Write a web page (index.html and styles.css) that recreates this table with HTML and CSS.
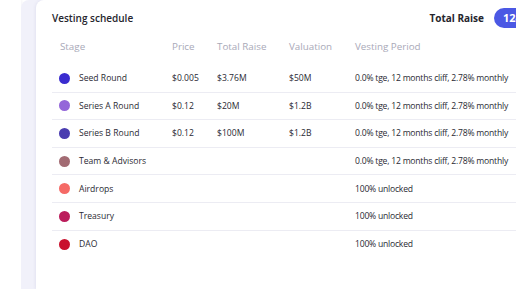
FILE: index.html
```html
<!DOCTYPE html>
<html>
<head>
    <title>Vesting schedule</title>
    <link rel="stylesheet" href="styles.css">
</head>
<body>
    <div class="page">
        <div class="side-panel"></div>
        <div class="content">
            <div class="card">
                <div class="card-header">
                    <h2>Vesting schedule</h2>
                    <div class="raise">
                        <span class="raise-label">Total Raise</span>
                        <span class="raise-badge">124</span>
                    </div>
                </div>

                <div class="table">
                    <div class="row head">
                        <div class="stage-head">Stage</div>
                        <div>Price</div>
                        <div>Total Raise</div>
                        <div>Valuation</div>
                        <div>Vesting Period</div>
                    </div>

                    <div class="row">
                        <span class="dot dot-seed"></span>
                        <div>Seed Round</div>
                        <div>$0.005</div>
                        <div>$3.76M</div>
                        <div>$50M</div>
                        <div class="period">0.0% tge, 12 months cliff, 2.78% monthly</div>
                    </div>
                    <div class="row">
                        <span class="dot dot-series-a"></span>
                        <div>Series A Round</div>
                        <div>$0.12</div>
                        <div>$20M</div>
                        <div>$1.2B</div>
                        <div class="period">0.0% tge, 12 months cliff, 2.78% monthly</div>
                    </div>
                    <div class="row">
                        <span class="dot dot-series-b"></span>
                        <div>Series B Round</div>
                        <div>$0.12</div>
                        <div>$100M</div>
                        <div>$1.2B</div>
                        <div class="period">0.0% tge, 12 months cliff, 2.78% monthly</div>
                    </div>
                    <div class="row">
                        <span class="dot dot-team"></span>
                        <div>Team &amp; Advisors</div>
                        <div></div>
                        <div></div>
                        <div></div>
                        <div class="period">0.0% tge, 12 months cliff, 2.78% monthly</div>
                    </div>
                    <div class="row">
                        <span class="dot dot-airdrops"></span>
                        <div>Airdrops</div>
                        <div></div>
                        <div></div>
                        <div></div>
                        <div class="period">100% unlocked</div>
                    </div>
                    <div class="row">
                        <span class="dot dot-treasury"></span>
                        <div>Treasury</div>
                        <div></div>
                        <div></div>
                        <div></div>
                        <div class="period">100% unlocked</div>
                    </div>
                    <div class="row last">
                        <span class="dot dot-dao"></span>
                        <div>DAO</div>
                        <div></div>
                        <div></div>
                        <div></div>
                        <div class="period">100% unlocked</div>
                    </div>
                </div>
            </div>
        </div>
    </div>
</body>
</html>
```

FILE: styles.css
```css
body {
    font-family: 'Open Sans', 'Noto Sans', sans-serif;
    margin: 0;
    padding: 0;
    background-color: #ffffff;
    color: #2a2a33;
    overflow: hidden;
}
.page {
    display: flex;
    height: 289px;
    width: 600px;
}
.side-panel {
    width: 21px;
    background-color: #ffffff;
    box-shadow: 1px 0 2px rgba(80, 80, 140, 0.06);
}
.content {
    flex: 1;
    background-color: #f1f1fa;
    border-top-left-radius: 8px;
    padding-left: 15px;
}
.card {
    width: 527px;
    height: 100%;
    background-color: #ffffff;
    border-top-left-radius: 8px;
    box-shadow: -1px 0 3px rgba(80, 80, 140, 0.08);
    padding: 0 0 0 16px;
    box-sizing: border-box;
}
.card-header {
    display: flex;
    justify-content: space-between;
    align-items: center;
    height: 36px;
    padding-right: 16px;
}
h2 {
    margin: 0;
    font-size: 10px;
    font-weight: 600;
    color: #25252d;
}
.raise {
    display: flex;
    align-items: center;
    gap: 10px;
}
.raise-label {
    font-size: 10px;
    font-weight: 700;
    color: #25252d;
}
.raise-badge {
    background-color: #4b58e4;
    color: #fff;
    font-size: 11px;
    font-weight: 700;
    line-height: 20px;
    padding: 0 14px 0 9px;
    border-radius: 10px;
    width: 30px;
}
.row {
    display: grid;
    grid-template-columns: 20px 93px 45px 72px 66px 1fr;
    align-items: center;
    height: 27.6px;
    padding-left: 7px;
    font-size: 8.6px;
    font-weight: 500;
    border-bottom: 1px solid #ececf3;
    box-sizing: border-box;
}
.row.head {
    height: 20px;
    margin-bottom: 9px;
    border-bottom: none;
    font-size: 9.8px;
    font-weight: 400;
    color: #a9a9b8;
}
.row.last {
    border-bottom: none;
}
.period {
    letter-spacing: -0.22px;
}
.stage-head {
    grid-column: span 2;
    padding-left: 1px;
}
.dot {
    width: 11px;
    height: 11px;
    border-radius: 50%;
}
.dot-seed { background-color: #3a2ccf; }
.dot-series-a { background-color: #9466d9; }
.dot-series-b { background-color: #4a3cb0; }
.dot-team { background-color: #a26b73; }
.dot-airdrops { background-color: #f56a66; }
.dot-treasury { background-color: #bb1d5b; }
.dot-dao { background-color: #c9112d; }
```
